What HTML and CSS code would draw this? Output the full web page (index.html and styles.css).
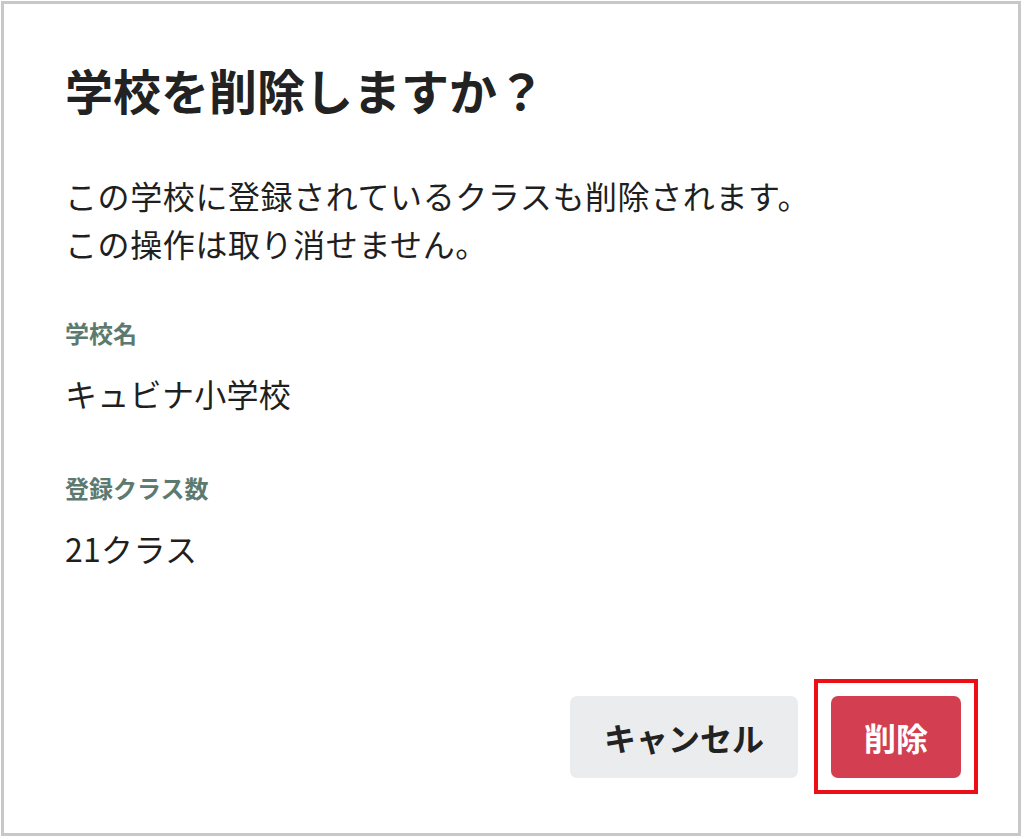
FILE: index.html
```html
<!DOCTYPE html>
<html lang="ja">
<head>
<meta charset="utf-8">
<title>学校を削除しますか？</title>
<link rel="stylesheet" href="styles.css">
</head>
<body>
<div class="frame">
  <h1 class="title">学校を削除しますか？</h1>
  <p class="message">この学校に登録されているクラスも削除されます。<br>この操作は取り消せません。</p>
  <dl class="fields">
    <dt class="label">学校名</dt>
    <dd class="value">キュビナ小学校</dd>
    <dt class="label label-second">登録クラス数</dt>
    <dd class="value">21クラス</dd>
  </dl>
  <div class="actions">
    <button class="btn btn-cancel" type="button">キャンセル</button>
    <button class="btn btn-delete" type="button">削除</button>
  </div>
</div>
</body>
</html>
```
FILE: styles.css
```css
html, body {
  margin: 0;
  padding: 0;
  background: #ffffff;
}

body {
  font-family: "Noto Sans CJK JP", "Noto Sans", sans-serif;
  color: #222222;
}

.frame {
  box-sizing: border-box;
  width: 1020px;
  height: 835px;
  margin: 1px 0 0 1px;
  border: 3px solid #c8c8c8;
  padding: 49px 57px 55px 61px;
  display: flex;
  flex-direction: column;
}

.title {
  margin: 0;
  font-size: 48px;
  line-height: 72px;
  font-weight: 700;
  color: #222222;
}

.message {
  margin: 46px 0 0;
  font-size: 32px;
  line-height: 48px;
  font-weight: 400;
  letter-spacing: 0.6px;
  color: #1f1f1f;
}

.fields {
  margin: 48px 0 0;
}

.label {
  margin: 0;
  font-size: 24px;
  line-height: 36px;
  font-weight: 700;
  color: #5c7a70;
}

.label-second {
  margin-top: 53px;
}

.value {
  margin: 18px 0 0;
  font-size: 32px;
  line-height: 48px;
  letter-spacing: 0.3px;
  color: #1f1f1f;
}

.actions {
  margin-top: auto;
  display: flex;
  justify-content: flex-end;
  gap: 33px;
}

.btn {
  height: 82px;
  padding: 0 33px;
  border: none;
  border-radius: 7px;
  font-family: "Noto Sans CJK JP", "Noto Sans", sans-serif;
  font-size: 32px;
  font-weight: 700;
  line-height: 1;
}

.btn-cancel {
  width: 228px;
  background: #ebeced;
  color: #222222;
}

.btn-delete {
  position: relative;
  width: 130px;
  background: #d33f50;
  color: #ffffff;
}

.btn-delete::after {
  content: "";
  position: absolute;
  top: -17px;
  left: -17px;
  right: -17px;
  bottom: -16px;
  border: 4px solid #ec1016;
  pointer-events: none;
}
```
